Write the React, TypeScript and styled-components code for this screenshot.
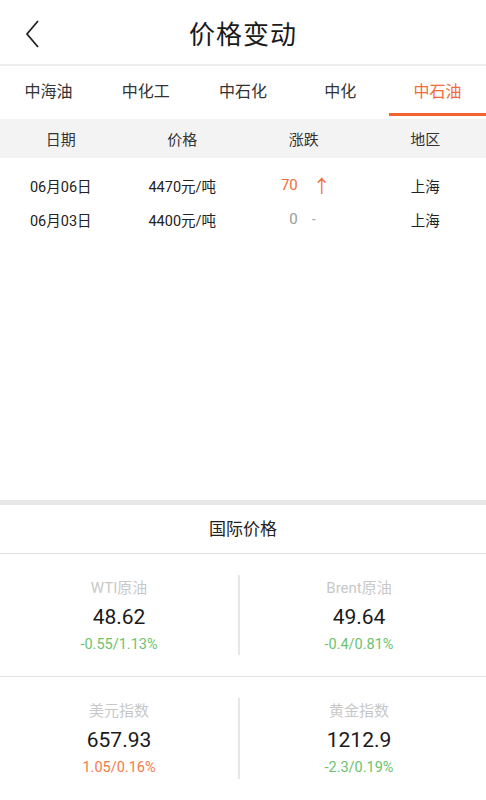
import React from "react";
import styled, { createGlobalStyle } from "styled-components";

const Global = createGlobalStyle`
  html, body { margin: 0; padding: 0; background: #fff; }
  body { font-family: Roboto, "Noto Sans CJK SC", sans-serif; color: #222; }
  * { box-sizing: border-box; }
`;

const Page = styled.div`
  width: 486px;
  height: 800px;
  display: flex;
  flex-direction: column;
  background: #fff;
  overflow: hidden;
`;

const Header = styled.div`
  height: 66px;
  display: flex;
  align-items: center;
  justify-content: center;
  position: relative;
  border-bottom: 2px solid #eeeeee;
`;

const BackButton = styled.div`
  position: absolute;
  left: 22px;
  top: 16px;
  width: 22px;
  height: 36px;
`;

const Title = styled.h1`
  margin: 0;
  font-size: 26px;
  font-weight: 400;
  color: #1a1a1a;
  font-family: "Noto Sans CJK SC", sans-serif;
  letter-spacing: 1px;
`;

const Tabs = styled.div`
  display: grid;
  grid-template-columns: repeat(5, 1fr);
  height: 50px;
`;

const Tab = styled.div<{ $active?: boolean }>`
  display: flex;
  align-items: center;
  justify-content: center;
  font-size: 16px;
  color: ${(p) => (p.$active ? "#f26b3c" : "#333")};
  font-family: "Noto Sans CJK SC", sans-serif;
  border-bottom: 3px solid ${(p) => (p.$active ? "#f2642f" : "transparent")};
`;

const TableHead = styled.div`
  display: grid;
  grid-template-columns: repeat(4, 1fr);
  height: 39px;
  background: #f3f3f3;
  margin-top: 3px;
`;

const HeadCell = styled.div`
  display: flex;
  align-items: center;
  justify-content: center;
  font-size: 15px;
  color: #333;
  font-family: "Noto Sans CJK SC", sans-serif;
`;

const Body = styled.div`
  flex: 0 0 342px;
  padding-top: 10px;
  display: flex;
  flex-direction: column;
`;

const Row = styled.div`
  display: grid;
  grid-template-columns: repeat(4, 1fr);
  height: 34px;
`;

const Cell = styled.div`
  display: flex;
  align-items: center;
  justify-content: center;
  font-size: 14.5px;
  color: #222;
  font-family: Roboto, "Noto Sans CJK SC", sans-serif;
`;

const ChangeCell = styled.div<{ $up?: boolean }>`
  display: flex;
  align-items: center;
  justify-content: center;
  font-size: 15px;
  color: ${(p) => (p.$up ? "#f26b3c" : "#999")};
`;

const ChangeNum = styled.span`
  width: 40px;
  text-align: right;
  padding-right: 6px;
`;

const ChangeMark = styled.span<{ $up?: boolean }>`
  width: 40px;
  text-align: left;
  padding-left: ${(p) => (p.$up ? "9px" : "8px")};
  font-size: ${(p) => (p.$up ? "18px" : "14px")};
  color: ${(p) => (p.$up ? "#f26b3c" : "#aaa")};
`;

const SectionGap = styled.div`
  height: 5px;
  background: #e8e8e8;
`;

const SectionTitle = styled.div`
  height: 49px;
  display: flex;
  align-items: center;
  justify-content: center;
  padding-bottom: 3px;
  font-size: 17px;
  color: #222;
  font-family: "Noto Sans CJK SC", sans-serif;
  border-bottom: 1px solid #e3e3e3;
`;

const Grid = styled.div`
  display: grid;
  grid-template-columns: 238px 1fr;
  grid-auto-rows: 123px;
`;

const Quote = styled.div<{ $right?: boolean; $bottom?: boolean }>`
  position: relative;
  display: flex;
  flex-direction: column;
  align-items: center;
  justify-content: center;
  padding-right: ${(p) => (p.$right ? "6px" : "0")};
  padding-top: 2px;
  border-bottom: ${(p) => (p.$bottom ? "none" : "1px solid #e3e3e3")};
  ${(p) =>
    p.$right
      ? `&::before {
    content: "";
    position: absolute;
    left: 0;
    top: 21px;
    bottom: 21px;
    width: 2px;
    background: #e6e6e6;
  }`
      : ""}
`;

const QLabel = styled.div`
  font-size: 15px;
  color: #c8c8c8;
  line-height: 20px;
  font-family: Roboto, "Noto Sans CJK SC", sans-serif;
`;

const QValue = styled.div`
  font-size: 21px;
  color: #1a1a1a;
  line-height: 28px;
  margin-top: 5px;
`;

const QChange = styled.div<{ $up?: boolean }>`
  font-size: 14.5px;
  line-height: 20px;
  margin-top: 4px;
  color: ${(p) => (p.$up ? "#f47a4a" : "#6cc36c")};
`;

const tabs = ["中海油", "中化工", "中石化", "中化", "中石油"];

const rows = [
  { date: "06月06日", price: "4470元/吨", change: "70", up: true, area: "上海" },
  { date: "06月03日", price: "4400元/吨", change: "0", up: false, area: "上海" },
];

const quotes = [
  { label: "WTI原油", value: "48.62", change: "-0.55/1.13%", up: false },
  { label: "Brent原油", value: "49.64", change: "-0.4/0.81%", up: false },
  { label: "美元指数", value: "657.93", change: "1.05/0.16%", up: true },
  { label: "黄金指数", value: "1212.9", change: "-2.3/0.19%", up: false },
];

export default function App() {
  return (
    <Page>
      <Global />
      <Header>
        <BackButton>
          <svg width="22" height="36" viewBox="0 0 22 36">
            <polyline points="16,5 5,18 16,31" fill="none" stroke="#222" strokeWidth="1.8" />
          </svg>
        </BackButton>
        <Title>价格变动</Title>
      </Header>
      <Tabs>
        {tabs.map((t, i) => (
          <Tab key={t} $active={i === 4}>
            {t}
          </Tab>
        ))}
      </Tabs>
      <TableHead>
        <HeadCell>日期</HeadCell>
        <HeadCell>价格</HeadCell>
        <HeadCell>涨跌</HeadCell>
        <HeadCell>地区</HeadCell>
      </TableHead>
      <Body>
        {rows.map((r) => (
          <Row key={r.date}>
            <Cell>{r.date}</Cell>
            <Cell>{r.price}</Cell>
            <ChangeCell $up={r.up}>
              <ChangeNum>{r.change}</ChangeNum>
              <ChangeMark $up={r.up}>{r.up ? "↑" : "-"}</ChangeMark>
            </ChangeCell>
            <Cell>{r.area}</Cell>
          </Row>
        ))}
      </Body>
      <SectionGap />
      <SectionTitle>国际价格</SectionTitle>
      <Grid>
        {quotes.map((q, i) => (
          <Quote key={q.label} $right={i % 2 === 1} $bottom={i >= 2}>
            <QLabel>{q.label}</QLabel>
            <QValue>{q.value}</QValue>
            <QChange $up={q.up}>{q.change}</QChange>
          </Quote>
        ))}
      </Grid>
    </Page>
  );
}
